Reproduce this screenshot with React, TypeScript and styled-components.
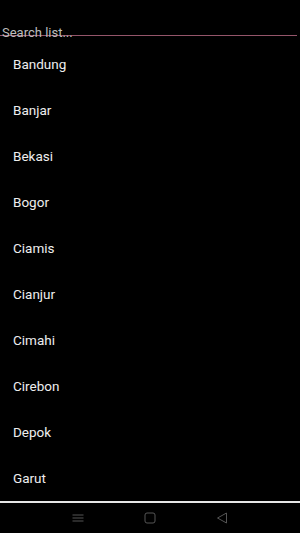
import React from "react";
import styled, { createGlobalStyle } from "styled-components";

const Global = createGlobalStyle`
  html, body { margin: 0; padding: 0; background: #000; }
  body { font-family: Roboto, "Noto Sans", sans-serif; }
  * { box-sizing: border-box; }
`;

const Screen = styled.div`
  width: 300px;
  height: 533px;
  display: flex;
  flex-direction: column;
  background: #000;
  overflow: hidden;
`;

const Header = styled.div`
  height: 41px;
  padding: 24px 3px 0 0;
`;

const SearchInput = styled.input`
  display: block;
  width: 100%;
  height: 16px;
  padding: 0 0 0 2px;
  margin: 0;
  border: none;
  background: linear-gradient(#94556a, #94556a) no-repeat 0 11px / 100% 1px;
  color: #ddd;
  font-family: Roboto, sans-serif;
  font-size: 13px;
  outline: none;
  &::placeholder { color: #bdbdbd; opacity: 1; }
`;

const List = styled.ul`
  flex: 1;
  list-style: none;
  margin: 0;
  padding: 0;
  overflow: hidden;
`;

const Item = styled.li`
  height: 46px;
  display: flex;
  align-items: center;
  padding-left: 13px;
  color: #eeeeee;
  font-size: 13.5px;
`;

const NavBar = styled.div`
  height: 32px;
  border-top: 2px solid #e6e6e6;
  display: flex;
  justify-content: center;
  align-items: center;
  gap: 60px;
  color: #555;
`;

const Icon = styled.svg`
  width: 12px;
  height: 12px;
  display: block;
`;

const cities = ["Bandung", "Banjar", "Bekasi", "Bogor", "Ciamis", "Cianjur", "Cimahi", "Cirebon", "Depok", "Garut"];

export default function App() {
  return (
    <Screen>
      <Global />
      <Header>
        <SearchInput placeholder="Search list..." />
      </Header>
      <List>
        {cities.map((c) => (
          <Item key={c}>{c}</Item>
        ))}
      </List>
      <NavBar>
        <Icon viewBox="0 0 12 12" fill="none" stroke="currentColor" strokeWidth="1">
          <path d="M0.5 3h11M0.5 6h11M0.5 9h11" />
        </Icon>
        <Icon viewBox="0 0 12 12" fill="none" stroke="currentColor" strokeWidth="1">
          <rect x="1" y="1" width="10" height="10" rx="2" />
        </Icon>
        <Icon viewBox="0 0 12 12" fill="none" stroke="currentColor" strokeWidth="1">
          <path d="M10.5 1v10L1.5 6z" strokeLinejoin="round" />
        </Icon>
      </NavBar>
    </Screen>
  );
}
